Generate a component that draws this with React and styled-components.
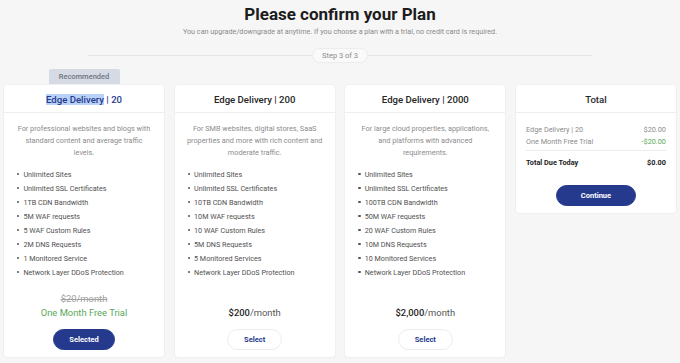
import React from "react";
import styled, { createGlobalStyle } from "styled-components";

const GlobalStyle = createGlobalStyle`
  html, body {
    margin: 0;
    padding: 0;
    background: #f6f6f6;
    font-family: Roboto, "Liberation Sans", Arial, sans-serif;
  }
`;

const Page = styled.div`
  width: 680px;
  height: 363px;
  overflow: hidden;
  padding-top: 2px;
  box-sizing: border-box;
`;

const Title = styled.h1`
  margin: 0;
  font-size: 17px;
  line-height: 24px;
  font-weight: 700;
  color: #1c1c1c;
  text-align: center;
`;

const Subtitle = styled.p`
  margin: 0;
  font-size: 7.2px;
  line-height: 12px;
  color: #8a8a8a;
  text-align: center;
`;

const StepRow = styled.div`
  width: 504px;
  margin: 10px auto 0;
  display: flex;
  align-items: center;
`;

const StepLine = styled.div`
  flex: 1;
  height: 1px;
  background: #e6e6e6;
`;

const StepPill = styled.div`
  height: 15px;
  padding: 0 9px;
  border: 1px solid #ececec;
  border-radius: 8px;
  box-sizing: border-box;
  font-size: 7.5px;
  line-height: 13px;
  color: #8a8a8a;
  background: #fafafa;
`;

const Grid = styled.div`
  margin-top: 6px;
  padding: 0 4px;
  display: grid;
  grid-template-columns: repeat(4, 160px);
  grid-template-rows: 16px 272px;
  column-gap: 10.67px;
`;

const Badge = styled.div`
  grid-column: 1;
  grid-row: 1;
  justify-self: center;
  width: 71px;
  height: 16px;
  border-radius: 2px 2px 0 0;
  background: #d6dae4;
  color: #6f7380;
  font-size: 7.5px;
  font-weight: 500;
  line-height: 16px;
  text-align: center;
`;

const Card = styled.div`
  grid-row: 2;
  align-self: ${(p) => (p.$short ? "start" : "stretch")};
  height: ${(p) => (p.$short ? "128px" : "auto")};
  background: #fff;
  border-radius: 4px;
  box-shadow: 0 0 0 1px #f0f0f0, 0 1px 2px rgba(0, 0, 0, 0.03);
  display: flex;
  flex-direction: column;
  overflow: hidden;
`;

const CardHead = styled.div`
  height: 28px;
  flex: none;
  border-bottom: 1px solid #efefef;
  box-sizing: border-box;
  display: flex;
  align-items: center;
  justify-content: center;
  padding-top: 1px;
  font-size: 9.6px;
  font-weight: 500;
  color: ${(p) => (p.$active ? "#27398e" : "#262626")};
`;

const Highlight = styled.span`
  background: #b7d2f6;
`;

const CardBody = styled.div`
  flex: 1;
  display: flex;
  flex-direction: column;
  padding: 10px 12px 7px;
`;

const Description = styled.p`
  margin: 0;
  font-size: 7.3px;
  line-height: 12px;
  color: #8c8c8c;
  text-align: center;
`;

const Features = styled.ul`
  margin: 8px 0 0;
  padding: 0 0 0 1px;
  list-style: none;
`;

const Feature = styled.li`
  display: flex;
  align-items: center;
  gap: 4px;
  height: 14px;
  font-size: 7.2px;
  color: #505050;
`;

const Dot = styled.span`
  width: 2.4px;
  height: 2.4px;
  border-radius: 50%;
  background: #555;
  flex: none;
`;

const PriceBlock = styled.div`
  margin-top: auto;
  display: flex;
  flex-direction: column;
  align-items: center;
`;

const Price = styled.div`
  font-size: 9.4px;
  line-height: 14px;
  color: ${(p) => (p.$old ? "#a0a0a0" : "#555")};
  text-decoration: ${(p) => (p.$old ? "line-through" : "none")};
`;

const Amount = styled.span`
  color: #1f1f1f;
  font-weight: 500;
`;

const Trial = styled.div`
  font-size: 9.4px;
  line-height: 14px;
  color: #5aa85a;
`;

const Button = styled.button`
  margin-top: 9px;
  height: 21px;
  width: ${(p) => p.$w}px;
  border-radius: 11px;
  font-family: inherit;
  font-size: 7.5px;
  font-weight: 700;
  padding: 0;
  cursor: pointer;
  border: 1px solid ${(p) => (p.$primary ? "#253a8c" : "#ebebeb")};
  background: ${(p) => (p.$primary ? "#253a8c" : "#fff")};
  color: ${(p) => (p.$primary ? "#fff" : "#253a8c")};
`;

const TotalBody = styled.div`
  padding: 10px 10px 8px;
  display: flex;
  flex-direction: column;
`;

const TotalRow = styled.div`
  display: flex;
  justify-content: space-between;
  height: 12px;
  align-items: center;
  font-size: 7.3px;
  color: ${(p) => (p.$strong ? "#222" : "#8c8c8c")};
  font-weight: ${(p) => (p.$strong ? 700 : 400)};
`;

const Value = styled.span`
  color: ${(p) => p.$color || "inherit"};
`;

const Divider = styled.div`
  height: 1px;
  background: #ececec;
  margin: 3px 0 5px;
`;

const ContinueWrap = styled.div`
  display: flex;
  justify-content: center;
  margin-top: 8px;
`;

const plans = [
  {
    name: "Edge Delivery",
    tier: "20",
    active: true,
    description:
      "For professional websites and blogs with standard content and average traffic levels.",
    features: [
      "Unlimited Sites",
      "Unlimited SSL Certificates",
      "1TB CDN Bandwidth",
      "5M WAF requests",
      "5 WAF Custom Rules",
      "2M DNS Requests",
      "1 Monitored Service",
      "Network Layer DDoS Protection",
    ],
    price: "$20",
  },
  {
    name: "Edge Delivery",
    tier: "200",
    description:
      "For SMB websites, digital stores, SaaS properties and more with rich content and moderate traffic.",
    features: [
      "Unlimited Sites",
      "Unlimited SSL Certificates",
      "10TB CDN Bandwidth",
      "10M WAF requests",
      "10 WAF Custom Rules",
      "5M DNS Requests",
      "5 Monitored Services",
      "Network Layer DDoS Protection",
    ],
    price: "$200",
  },
  {
    name: "Edge Delivery",
    tier: "2000",
    description:
      "For large cloud properties, applications, and platforms with advanced requirements.",
    features: [
      "Unlimited Sites",
      "Unlimited SSL Certificates",
      "100TB CDN Bandwidth",
      "50M WAF requests",
      "20 WAF Custom Rules",
      "10M DNS Requests",
      "10 Monitored Services",
      "Network Layer DDoS Protection",
    ],
    price: "$2,000",
  },
];

function PlanCard({ plan }) {
  return (
    <Card>
      <CardHead $active={plan.active}>
        {plan.active ? <Highlight>{plan.name}</Highlight> : plan.name}
        &nbsp;| {plan.tier}
      </CardHead>
      <CardBody>
        <Description>{plan.description}</Description>
        <Features>
          {plan.features.map((f) => (
            <Feature key={f}>
              <Dot />
              {f}
            </Feature>
          ))}
        </Features>
        <PriceBlock>
          {plan.active ? (
            <>
              <Price $old>{plan.price}/month</Price>
              <Trial>One Month Free Trial</Trial>
              <Button $primary $w={62}>Selected</Button>
            </>
          ) : (
            <>
              <Price>
                <Amount>{plan.price}</Amount>/month
              </Price>
              <Button $w={55}>Select</Button>
            </>
          )}
        </PriceBlock>
      </CardBody>
    </Card>
  );
}

export default function App() {
  return (
    <Page>
      <GlobalStyle />
      <Title>Please confirm your Plan</Title>
      <Subtitle>
        You can upgrade/downgrade at anytime. If you choose a plan with a trial, no credit card is required.
      </Subtitle>
      <StepRow>
        <StepLine />
        <StepPill>Step 3 of 3</StepPill>
        <StepLine />
      </StepRow>
      <Grid>
        <Badge>Recommended</Badge>
        {plans.map((p) => (
          <PlanCard key={p.tier} plan={p} />
        ))}
        <Card $short>
          <CardHead>Total</CardHead>
          <TotalBody>
            <TotalRow>
              <span>Edge Delivery | 20</span>
              <Value>$20.00</Value>
            </TotalRow>
            <TotalRow>
              <span>One Month Free Trial</span>
              <Value $color="#5aa85a">-$20.00</Value>
            </TotalRow>
            <Divider />
            <TotalRow $strong>
              <span>Total Due Today</span>
              <Value>$0.00</Value>
            </TotalRow>
            <ContinueWrap>
              <Button $primary $w={80}>Continue</Button>
            </ContinueWrap>
          </TotalBody>
        </Card>
      </Grid>
    </Page>
  );
}
